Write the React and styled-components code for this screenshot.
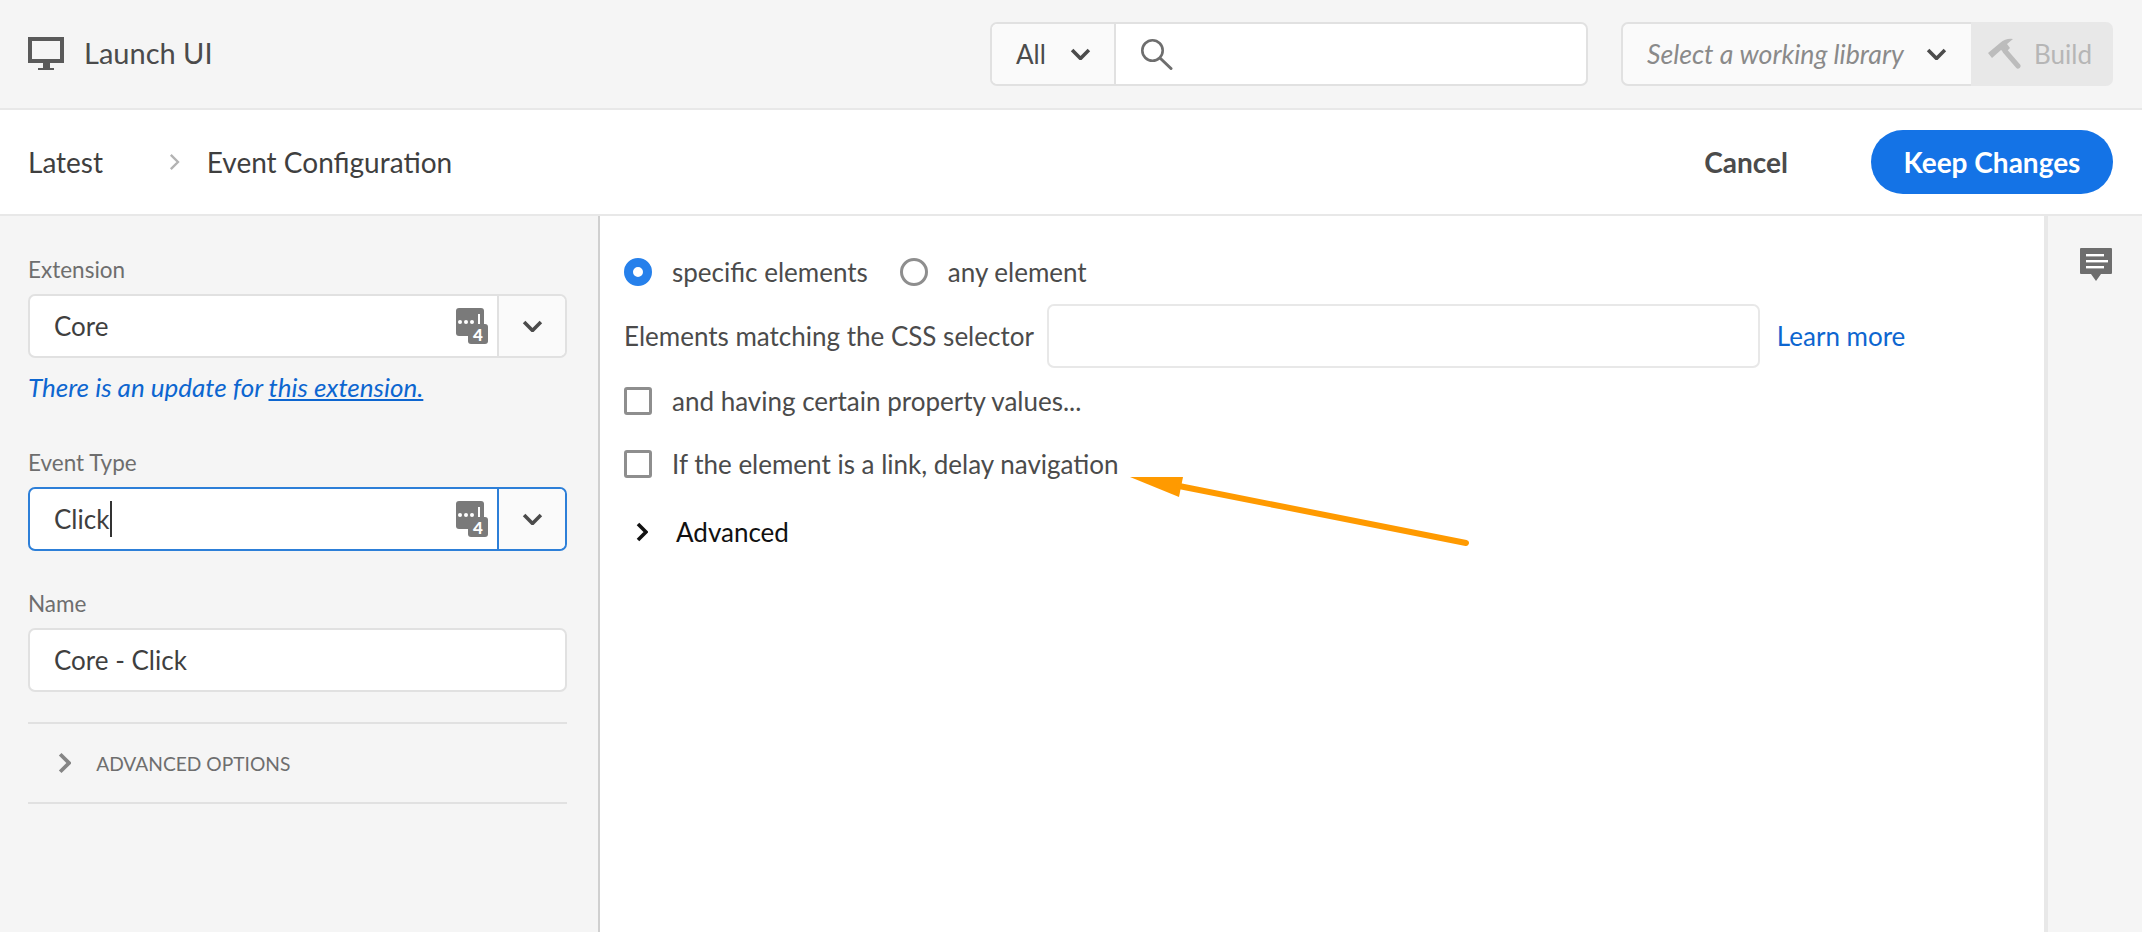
import React from 'react';
import styled, { createGlobalStyle } from 'styled-components';

const GlobalStyle = createGlobalStyle`
  html, body {
    margin: 0;
    padding: 0;
    background: #fff;
  }
  body {
    font-family: Lato, "Open Sans", sans-serif;
    color: #4b4b4b;
  }
  * {
    box-sizing: border-box;
  }
`;

const Page = styled.div`
  position: relative;
  width: 2142px;
  height: 932px;
  overflow: hidden;
  display: flex;
  flex-direction: column;
`;

const TopBar = styled.header`
  height: 110px;
  flex: none;
  display: flex;
  align-items: center;
  padding: 0 29px 0 28px;
  background: #f5f5f5;
  border-bottom: 2px solid #e8e8e8;
`;

const Brand = styled.div`
  display: flex;
  align-items: center;
  gap: 20px;
  font-size: 29px;
  line-height: 32px;
  padding-bottom: 2px;
  color: #4b4b4b;
  margin-right: auto;
`;

const SearchGroup = styled.div`
  width: 598px;
  height: 64px;
  display: flex;
  background: #fff;
  border: 2px solid #e1e1e1;
  border-radius: 7px;
  margin-right: 33px;
`;

const ScopeSelect = styled.div`
  width: 124px;
  display: flex;
  align-items: center;
  gap: 24px;
  padding-left: 24px;
  font-size: 26px;
  background: #fafafa;
  border-right: 2px solid #e1e1e1;
  border-radius: 6px 0 0 6px;
`;

const SearchIcon = styled.div`
  display: flex;
  align-items: center;
  padding-left: 25px;
`;

const LibraryGroup = styled.div`
  width: 492px;
  height: 64px;
  display: flex;
  border-radius: 7px;
`;

const LibrarySelect = styled.div`
  width: 350px;
  display: flex;
  align-items: center;
  justify-content: space-between;
  padding: 0 24px 0 24px;
  font-size: 26.7px;
  font-style: italic;
  color: #8a8a8a;
  background: #fafafa;
  border: 2px solid #e1e1e1;
  border-right: 0;
  border-radius: 7px 0 0 7px;
`;

const BuildButton = styled.div`
  flex: 1;
  display: flex;
  align-items: center;
  gap: 13px;
  padding-left: 17px;
  font-size: 26px;
  color: #b6b6b6;
  background: #e8e8e8;
  border-radius: 0 7px 7px 0;
`;

const SubBar = styled.div`
  height: 106px;
  flex: none;
  display: flex;
  align-items: center;
  padding: 0 29px 0 28px;
  background: #fff;
  border-bottom: 2px solid #e8e8e8;
`;

const Crumb = styled.span`
  font-size: 28px;
  color: #3f3f3f;
`;

const CrumbSep = styled.span`
  display: flex;
  margin: 0 27px 0 66px;
`;

const Cancel = styled.span`
  margin-left: auto;
  margin-right: 83px;
  font-size: 28px;
  font-weight: 700;
  color: #4b4b4b;
`;

const KeepButton = styled.button`
  width: 242px;
  height: 64px;
  border: 0;
  border-radius: 32px;
  background: #1473e6;
  color: #fff;
  font-family: inherit;
  font-size: 28px;
  font-weight: 700;
`;

const Body = styled.div`
  flex: 1;
  display: flex;
  min-height: 0;
`;

const Sidebar = styled.aside`
  width: 600px;
  flex: none;
  padding: 39px 31px 0 28px;
  background: #f5f5f5;
  border-right: 2px solid #d0d0d0;
`;

const FieldLabel = styled.div`
  height: 30px;
  line-height: 30px;
  font-size: 22.5px;
  color: #6e6e6e;
  margin-top: ${p => p.$top || 0}px;
  margin-bottom: 9px;
`;

const Combo = styled.div`
  height: 64px;
  display: flex;
  border: 2px solid ${p => (p.$focused ? '#2d7fd8' : '#e1e1e1')};
  border-radius: 7px;
  background: #fff;
`;

const ComboValue = styled.div`
  flex: 1;
  display: flex;
  align-items: center;
  padding-left: 24px;
  font-size: 26px;
  color: #3f3f3f;
`;

const Caret = styled.span`
  width: 2px;
  height: 36px;
  background: #333;
  margin-left: 1px;
`;

const BadgeIcon = styled.svg`
  align-self: center;
  margin-right: 9px;
  flex: none;
`;

const ComboToggle = styled.div`
  width: 68px;
  flex: none;
  display: flex;
  align-items: center;
  justify-content: center;
  background: #fafafa;
  border-left: 2px solid ${p => (p.$focused ? '#2d7fd8' : '#e1e1e1')};
  border-radius: 0 6px 6px 0;
`;

const UpdateNote = styled.div`
  margin-top: 13px;
  height: 32px;
  line-height: 32px;
  font-size: 26px;
  font-style: italic;
  color: #0d66d0;

  a {
    color: inherit;
    text-decoration: underline;
  }
`;

const TextBox = styled.div`
  height: 64px;
  display: flex;
  align-items: center;
  padding-left: 24px;
  font-size: 26px;
  color: #3f3f3f;
  background: #fff;
  border: 2px solid #e1e1e1;
  border-radius: 7px;
`;

const AdvancedOptions = styled.div`
  margin-top: 30px;
  height: 82px;
  display: flex;
  align-items: center;
  gap: 25px;
  padding-left: 30px;
  font-size: 19.2px;
  color: #6e6e6e;
  border-top: 2px solid #e1e1e1;
  border-bottom: 2px solid #e1e1e1;
`;

const Main = styled.main`
  flex: 1;
  padding: 36px 0 0 24px;
  background: #fff;
`;

const Row = styled.div`
  height: ${p => p.$height || 40}px;
  margin-top: ${p => p.$top || 0}px;
  display: flex;
  align-items: center;
  font-size: 26px;
  color: #4b4b4b;
`;

const Radio = styled.span`
  width: 28px;
  height: 28px;
  flex: none;
  border-radius: 50%;
  background: #fff;
  border: ${p => (p.$checked ? '9.5px solid #2680eb' : '3px solid #8e8e8e')};
  margin-right: 20px;
`;

const RadioText = styled.span`
  margin-right: 32px;
`;

const Checkbox = styled.span`
  width: 28px;
  height: 28px;
  flex: none;
  border: 3px solid #8e8e8e;
  border-radius: 3px;
  background: #fff;
  margin-right: 20px;
`;

const SelectorInput = styled.div`
  width: 713px;
  height: 64px;
  flex: none;
  margin: 0 17px 0 13px;
  border: 2px solid #e8e8e8;
  border-radius: 7px;
`;

const LearnMore = styled.a`
  color: #0d66d0;
`;

const AdvancedRow = styled(Row)`
  color: #111;
  padding-left: 12px;
  gap: 28px;
`;

const Rail = styled.aside`
  width: 98px;
  flex: none;
  display: flex;
  justify-content: center;
  padding: 32px 0 0 2px;
  background: #f5f5f5;
  border-left: 4px solid #e8e8e8;
`;

const Arrow = styled.svg`
  position: absolute;
  left: 0;
  top: 0;
  pointer-events: none;
`;

const Chevron = ({ color = '#4b4b4b', width = 21 }) => (
  <svg width={width} height={width * 0.6} viewBox="0 0 20 12">
    <path d="M2 2l8 8 8-8" fill="none" stroke={color} strokeWidth="3.4" />
  </svg>
);

const ChevronRight = ({ color, size = 20, weight = 3.4 }) => (
  <svg width={size * 0.6} height={size} viewBox="0 0 12 20">
    <path d="M2 2l8 8-8 8" fill="none" stroke={color} strokeWidth={weight} />
  </svg>
);

const ExtensionBadge = () => (
  <BadgeIcon width="32" height="36" viewBox="0 0 32 36">
    <rect x="0" y="0" width="28" height="28" rx="3" fill="#7a7a7a" />
    <circle cx="4" cy="14" r="2" fill="#fff" />
    <circle cx="10" cy="14" r="2" fill="#fff" />
    <circle cx="16" cy="14" r="2" fill="#fff" />
    <rect x="22" y="6" width="2" height="12" fill="#fff" />
    <rect x="12" y="16" width="20" height="20" rx="3" fill="#7a7a7a" />
    <text x="22" y="33" textAnchor="middle" fontFamily="Lato, sans-serif" fontWeight="900" fontSize="17" fill="#fff">4</text>
  </BadgeIcon>
);

const App = () => (
  <Page>
    <GlobalStyle />
    <TopBar>
      <Brand>
        <svg width="36" height="33" viewBox="0 0 36 33">
          <path fillRule="evenodd" d="M0 0h36v26H22v5h4v2H10v-2h5v-5H0zM4 4v18h28V4z" fill="#5a5a5a" />
        </svg>
        Launch UI
      </Brand>
      <SearchGroup>
        <ScopeSelect>
          All
          <Chevron />
        </ScopeSelect>
        <SearchIcon>
          <svg width="32" height="31" viewBox="0 0 32 31">
            <circle cx="11.5" cy="11.5" r="10.2" fill="none" stroke="#6e6e6e" strokeWidth="2.6" />
            <path d="M19.5 19.5L30 29.5" stroke="#6e6e6e" strokeWidth="3" strokeLinecap="round" />
          </svg>
        </SearchIcon>
      </SearchGroup>
      <LibraryGroup>
        <LibrarySelect>
          Select a working library
          <Chevron />
        </LibrarySelect>
        <BuildButton>
          <svg width="33" height="32" viewBox="0 0 33 32">
            <path d="M0 15L12 5Q18 0 25 1L19 6L22 10L17 15L13 12L4 20z" fill="#bcbcbc" />
            <path d="M17 13L30 28" stroke="#bcbcbc" strokeWidth="5" strokeLinecap="round" />
          </svg>
          Build
        </BuildButton>
      </LibraryGroup>
    </TopBar>
    <SubBar>
      <Crumb>Latest</Crumb>
      <CrumbSep>
        <ChevronRight color="#b3b3b3" size={18} weight={2.6} />
      </CrumbSep>
      <Crumb>Event Configuration</Crumb>
      <Cancel>Cancel</Cancel>
      <KeepButton>Keep Changes</KeepButton>
    </SubBar>
    <Body>
      <Sidebar>
        <FieldLabel>Extension</FieldLabel>
        <Combo>
          <ComboValue>Core</ComboValue>
          <ExtensionBadge />
          <ComboToggle>
            <Chevron />
          </ComboToggle>
        </Combo>
        <UpdateNote>
          There is an update for <a href="#0">this extension.</a>
        </UpdateNote>
        <FieldLabel $top={45}>Event Type</FieldLabel>
        <Combo $focused>
          <ComboValue>
            Click
            <Caret />
          </ComboValue>
          <ExtensionBadge />
          <ComboToggle $focused>
            <Chevron />
          </ComboToggle>
        </Combo>
        <FieldLabel $top={38}>Name</FieldLabel>
        <TextBox>Core - Click</TextBox>
        <AdvancedOptions>
          <ChevronRight color="#858585" size={22} />
          ADVANCED OPTIONS
        </AdvancedOptions>
      </Sidebar>
      <Main>
        <Row>
          <Radio $checked />
          <RadioText>specific elements</RadioText>
          <Radio />
          <RadioText>any element</RadioText>
        </Row>
        <Row $height={64} $top={12}>
          Elements matching the CSS selector
          <SelectorInput />
          <LearnMore>Learn more</LearnMore>
        </Row>
        <Row $top={13}>
          <Checkbox />
          and having certain property values...
        </Row>
        <Row $top={23}>
          <Checkbox />
          If the element is a link, delay navigation
        </Row>
        <AdvancedRow $top={28}>
          <ChevronRight color="#111" size={20} weight={3.6} />
          Advanced
        </AdvancedRow>
      </Main>
      <Rail>
        <svg width="32" height="33" viewBox="0 0 32 33">
          <path d="M1 0h30a1 1 0 0 1 1 1v24a1 1 0 0 1-1 1H21l-5 7-5-7H1a1 1 0 0 1-1-1V1a1 1 0 0 1 1-1z" fill="#6e6e6e" />
          <rect x="6" y="6" width="18" height="2.4" fill="#fff" />
          <rect x="6" y="12" width="22" height="2.4" fill="#fff" />
          <rect x="6" y="18" width="18" height="2.4" fill="#fff" />
        </svg>
      </Rail>
    </Body>
    <Arrow width="2142" height="932" viewBox="0 0 2142 932">
      <path d="M1130 477h53l-4 20z" fill="#ff9a00" />
      <path d="M1179 486L1466 543" stroke="#ff9a00" strokeWidth="6" strokeLinecap="round" />
    </Arrow>
  </Page>
);

export default App;
